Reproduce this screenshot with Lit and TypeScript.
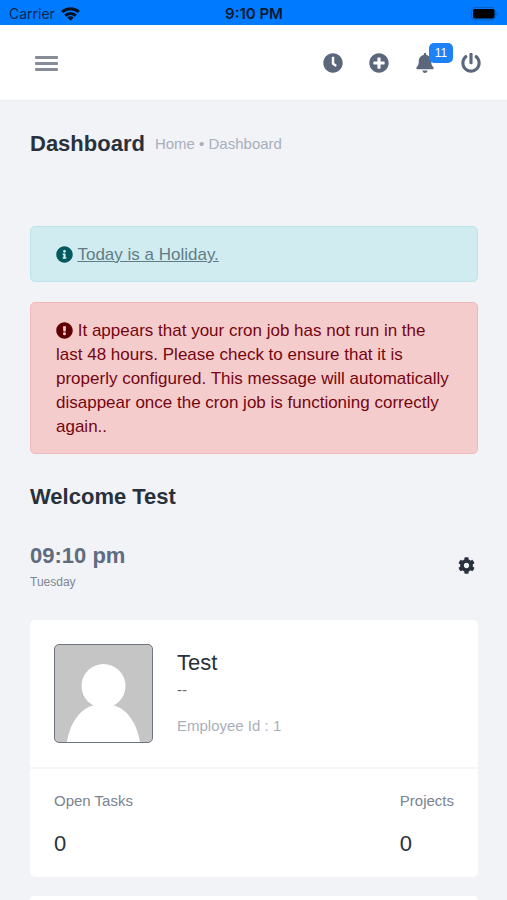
import { LitElement, html, css, svg } from "lit";
import { customElement, property } from "lit/decorators.js";

const icons: Record<string, { box: string; d: string }> = {
  clock: {
    box: "0 0 512 512",
    d: "M256,8C119,8,8,119,8,256S119,504,256,504,504,393,504,256,393,8,256,8Zm92.49,313h0l-20,25a16,16,0,0,1-22.49,2.5h0l-67-49.72a40,40,0,0,1-15-31.23V112a16,16,0,0,1,16-16h32a16,16,0,0,1,16,16V256l58,42.5A16,16,0,0,1,348.49,321Z",
  },
  plus: {
    box: "0 0 512 512",
    d: "M256 8C119 8 8 119 8 256s111 248 248 248 248-111 248-248S393 8 256 8zm144 276c0 6.6-5.4 12-12 12h-92v92c0 6.6-5.4 12-12 12h-56c-6.6 0-12-5.4-12-12v-92h-92c-6.6 0-12-5.4-12-12v-56c0-6.6 5.4-12 12-12h92v-92c0-6.6 5.4-12 12-12h56c6.6 0 12 5.4 12 12v92h92c6.6 0 12 5.4 12 12v56z",
  },
  bell: {
    box: "0 0 448 512",
    d: "M224 512c35.32 0 63.97-28.65 63.97-64H160.03c0 35.35 28.65 64 63.97 64zm215.39-149.71c-19.32-20.76-55.47-51.99-55.47-154.29 0-77.7-54.48-139.9-127.94-155.16V32c0-17.67-14.32-32-31.98-32s-31.98 14.33-31.98 32v20.84C118.56 68.1 64.08 130.3 64.08 208c0 102.3-36.15 133.53-55.47 154.29-6 6.45-8.66 14.16-8.61 21.71.11 16.4 12.98 32 32.1 32h383.8c19.12 0 32-15.6 32.1-32 .05-7.55-2.61-15.27-8.61-21.71z",
  },
  power: {
    box: "0 0 512 512",
    d: "M400 54.1c63 45 104 118.6 104 201.9 0 136.8-110.8 247.7-247.5 248C120 504.3 8.2 393 8 256.4 7.9 173.1 48.9 99.3 111.8 54.2c11.7-8.3 28-4.8 35 7.7L162.6 90c5.9 10.5 3.1 23.8-6.6 31-41.5 30.8-68 79.6-68 134.9-.1 92.3 74.5 168.1 168 168.1 91.6 0 168.6-74.2 168-169.1-.3-51.8-24.7-101.8-68.1-134-9.7-7.2-12.4-20.5-6.5-30.9l15.8-28.1c7-12.4 23.2-16.1 34.8-7.8zM296 264V24c0-13.3-10.7-24-24-24h-32c-13.3 0-24 10.7-24 24v240c0 13.3 10.7 24 24 24h32c13.3 0 24-10.7 24-24z",
  },
  info: {
    box: "0 0 512 512",
    d: "M256 8C119.043 8 8 119.083 8 256c0 136.997 111.043 248 248 248s248-111.003 248-248C504 119.083 392.957 8 256 8zm0 110c23.196 0 42 18.804 42 42s-18.804 42-42 42-42-18.804-42-42 18.804-42 42-42zm56 254c0 6.627-5.373 12-12 12h-88c-6.627 0-12-5.373-12-12v-24c0-6.627 5.373-12 12-12h12v-64h-12c-6.627 0-12-5.373-12-12v-24c0-6.627 5.373-12 12-12h64c6.627 0 12 5.373 12 12v100h12c6.627 0 12 5.373 12 12v24z",
  },
  warning: {
    box: "0 0 512 512",
    d: "M504 256c0 136.997-111.043 248-248 248S8 392.997 8 256C8 119.083 119.043 8 256 8s248 111.083 248 248zm-248 50c-25.405 0-46 20.595-46 46s20.595 46 46 46 46-20.595 46-46-20.595-46-46-46zm-43.673-165.346l7.418 136c.347 6.364 5.609 11.346 11.982 11.346h48.546c6.373 0 11.635-4.982 11.982-11.346l7.418-136c.375-6.874-5.098-12.654-11.982-12.654h-63.383c-6.884 0-12.356 5.78-11.981 12.654z",
  },
  cog: {
    box: "0 0 512 512",
    d: "M487.4 315.7l-42.6-24.6c4.3-23.2 4.3-47 0-70.2l42.6-24.6c4.9-2.8 7.1-8.6 5.5-14-11.1-35.6-30-67.8-54.7-94.6-3.8-4.1-10-5.1-14.8-2.3L380.8 110c-17.9-15.4-38.5-27.3-60.8-35.1V25.8c0-5.6-3.9-10.5-9.4-11.7-36.7-8.2-74.3-7.8-109.2 0-5.5 1.2-9.4 6.1-9.4 11.7V75c-22.2 7.9-42.8 19.8-60.8 35.1L88.7 85.5c-4.9-2.8-11-1.9-14.8 2.3-24.7 26.7-43.6 58.9-54.7 94.6-1.7 5.4.6 11.2 5.5 14L67.3 221c-4.3 23.2-4.3 47 0 70.2l-42.6 24.6c-4.9 2.8-7.1 8.6-5.5 14 11.1 35.6 30 67.8 54.7 94.6 3.8 4.1 10 5.1 14.8 2.3l42.6-24.6c17.9 15.4 38.5 27.3 60.8 35.1v49.2c0 5.6 3.9 10.5 9.4 11.7 36.7 8.2 74.3 7.8 109.2 0 5.5-1.2 9.4-6.1 9.4-11.7v-49.2c22.2-7.9 42.8-19.8 60.8-35.1l42.6 24.6c4.9 2.8 11 1.9 14.8-2.3 24.7-26.7 43.6-58.9 54.7-94.6 1.5-5.5-.7-11.3-5.6-14.1zM256 336c-44.1 0-80-35.9-80-80s35.9-80 80-80 80 35.9 80 80-35.9 80-80 80z",
  },
};

@customElement("app-icon")
export class AppIcon extends LitElement {
  @property() name = "clock";

  static styles = css`
    :host {
      display: inline-block;
      width: 20px;
      height: 20px;
    }
    .glyph {
      display: block;
      width: 100%;
      height: 100%;
      fill: currentColor;
    }
  `;

  render() {
    const icon = icons[this.name];
    return html`<svg class="glyph" viewBox=${icon.box} aria-hidden="true">
      ${svg`<path d=${icon.d}></path>`}
    </svg>`;
  }
}

@customElement("status-bar")
export class StatusBar extends LitElement {
  static styles = css`
    :host {
      display: grid;
      grid-template-columns: 1fr auto 1fr;
      align-items: center;
      height: 25px;
      padding: 2px 8px 0 9px;
      box-sizing: border-box;
      background: #007bff;
      color: #06264f;
      font: 14px/20px Inter, "Liberation Sans", sans-serif;
    }
    .carrier {
      display: flex;
      align-items: center;
      gap: 6px;
    }
    .time {
      font-size: 15px;
      font-weight: 600;
      color: #03182f;
    }
    .battery {
      justify-self: end;
    }
    svg {
      display: block;
    }
  `;

  render() {
    return html`
      <span class="carrier">
        Carrier
        <svg width="19" height="14" viewBox="0 0 19 14" fill="none" stroke="#03101f" stroke-width="3">
          <path d="M1.2 5a12 12 0 0 1 16.6 0"></path>
          <path d="M4.2 8.6a7.6 7.6 0 0 1 10.6 0"></path>
          <path d="M9.500 13.800l-3.200-3.200a4.600 4.600 0 0 1 6.400 0z" fill="#03101f" stroke="none"></path>
        </svg>
      </span>
      <span class="time">9:10 PM</span>
      <svg class="battery" width="29" height="14" viewBox="0 0 29 14">
        <rect x="1.500" y="0.500" width="24" height="12.500" rx="3.500" fill="none" stroke="#0461c4"></rect>
        <rect x="3" y="2" width="21.500" height="9.500" rx="2" fill="#000"></rect>
        <path d="M26.500 4.500a2.500 2.500 0 0 1 0 4.500z" fill="#0461c4"></path>
      </svg>
    `;
  }
}

@customElement("app-root")
export class AppRoot extends LitElement {
  static styles = css`
    :host {
      display: flex;
      flex-direction: column;
      min-height: 100vh;
      background: #f1f3f7;
      color: #28313c;
      font: 17px/24px "Liberation Sans", Arial, sans-serif;
    }
    h1,
    h2,
    h3,
    p,
    dl,
    dd {
      margin: 0;
    }
    button {
      display: block;
      padding: 0;
      border: 0;
      background: none;
      color: inherit;
      cursor: pointer;
    }
    .topbar {
      display: flex;
      align-items: center;
      justify-content: space-between;
      height: 76px;
      padding: 1px 26px 0 35px;
      box-sizing: border-box;
      background: #fff;
      border-bottom: 1px solid #e8eef3;
      color: #5b677b;
    }
    .menu {
      display: grid;
      gap: 3px;
      width: 23px;
    }
    .bar {
      height: 3px;
      border-radius: 1px;
      background: #868c95;
    }
    .actions {
      display: flex;
      gap: 26px;
    }
    .actions app-icon {
      display: block;
    }
    .alerts {
      position: relative;
    }
    .badge {
      position: absolute;
      left: 14px;
      top: -10px;
      width: 24px;
      border-radius: 5px;
      background: #1d82f5;
      color: #fff;
      font: 12px/20px "Liberation Sans", Arial, sans-serif;
      text-align: center;
    }
    .page {
      flex: 1;
      display: flex;
      flex-direction: column;
      padding: 28px 29px 0 30px;
    }
    .title {
      display: flex;
      align-items: center;
      gap: 10px;
      margin-bottom: 67px;
    }
    h1,
    h2,
    .clock {
      font-size: 22px;
      line-height: 30px;
      font-weight: 700;
    }
    .crumbs {
      font-size: 15px;
      color: #a9afbd;
    }
    .crumbs a {
      color: inherit;
      text-decoration: none;
    }
    .alert {
      margin-bottom: 20px;
      padding: 16px 25px 14px;
      border: 1px solid;
      border-radius: 5px;
    }
    .alert app-icon {
      width: 17px;
      height: 17px;
      vertical-align: -3px;
    }
    .alert-info {
      background: #d1ecf0;
      border-color: #bce5eb;
      color: #04595c;
    }
    .alert-info a {
      color: #607d86;
    }
    .alert-danger {
      background: #f5cccc;
      border-color: #f1b8bb;
      color: #760510;
    }
    .alert-danger app-icon {
      color: #5f0003;
    }
    h2 {
      margin: 8px 0 29px;
    }
    .now {
      display: flex;
      align-items: center;
      justify-content: space-between;
      margin-bottom: 27px;
      padding-right: 3px;
    }
    .clock {
      color: #5f6b7f;
    }
    .day {
      font-size: 12px;
      line-height: 22px;
      color: #7f8795;
    }
    .settings {
      padding-bottom: 4px;
    }
    .settings app-icon {
      display: block;
      width: 17px;
      height: 17px;
    }
    .card {
      margin-bottom: 19px;
      border-radius: 5px;
      background: #fff;
    }
    .profile {
      display: flex;
      gap: 24px;
      padding: 24px;
      border-bottom: 2px solid #f3f5f8;
    }
    .avatar {
      display: block;
      width: 99px;
      height: 99px;
      box-sizing: border-box;
      border: 1px solid #6f757f;
      border-radius: 5px;
      background: #c5c5c5;
    }
    .person {
      padding-top: 4px;
    }
    h3,
    .stat dd {
      font-size: 22px;
      line-height: 30px;
      font-weight: 400;
    }
    .role {
      font-size: 15px;
      color: #5f6670;
      margin-bottom: 12px;
    }
    .employee {
      font-size: 15px;
      color: #a9afbb;
    }
    .stats {
      display: flex;
      justify-content: space-between;
      padding: 20px 24px 18px;
    }
    .stat dt {
      margin-bottom: 16px;
      font-size: 15px;
      color: #7a8391;
    }
    .next {
      flex: 1;
      margin: 0;
      border-radius: 5px 5px 0 0;
    }
  `;

  render() {
    return html`
      <status-bar></status-bar>
      <header class="topbar">
        <button class="menu" aria-label="Menu">
          <span class="bar"></span><span class="bar"></span><span class="bar"></span>
        </button>
        <nav class="actions">
          <button aria-label="Timer"><app-icon name="clock"></app-icon></button>
          <button aria-label="Add"><app-icon name="plus"></app-icon></button>
          <button class="alerts" aria-label="Notifications">
            <app-icon name="bell"></app-icon><span class="badge">11</span>
          </button>
          <button aria-label="Log out"><app-icon name="power"></app-icon></button>
        </nav>
      </header>
      <main class="page">
        <div class="title">
          <h1>Dashboard</h1>
          <nav class="crumbs"><a href="#">Home</a> • Dashboard</nav>
        </div>
        <div class="alert alert-info">
          <app-icon name="info"></app-icon> <a href="#">Today is a Holiday.</a>
        </div>
        <div class="alert alert-danger">
          <app-icon name="warning"></app-icon> It appears that your cron job has not run in the last
          48 hours. Please check to ensure that it is properly configured. This message will
          automatically disappear once the cron job is functioning correctly again..
        </div>
        <h2>Welcome Test</h2>
        <section class="now">
          <div>
            <p class="clock">09:10 pm</p>
            <p class="day">Tuesday</p>
          </div>
          <button class="settings" aria-label="Settings"><app-icon name="cog"></app-icon></button>
        </section>
        <section class="card">
          <div class="profile">
            <svg class="avatar" viewBox="0 0 97 97" role="img" aria-label="Test" fill="#fff">
              <circle cx="48.500" cy="41" r="22"></circle>
              <path d="M12 97C15 78 25 64 38 60.500Q48.500 57 59 60.500C72 64 82 78 85 97z"></path>
            </svg>
            <div class="person">
              <h3>Test</h3>
              <p class="role">--</p>
              <p class="employee">Employee Id : 1</p>
            </div>
          </div>
          <dl class="stats">
            <div class="stat"><dt>Open Tasks</dt><dd>0</dd></div>
            <div class="stat"><dt>Projects</dt><dd>0</dd></div>
          </dl>
        </section>
        <section class="card next"></section>
      </main>
    `;
  }
}
